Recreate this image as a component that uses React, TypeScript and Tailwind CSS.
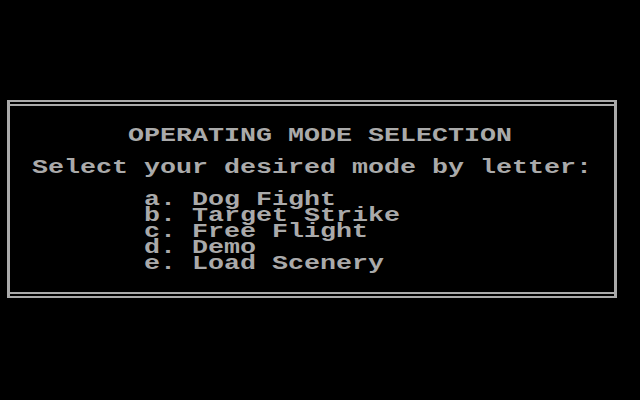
const modes = [
  { key: "a", label: "Dog Fight" },
  { key: "b", label: "Target Strike" },
  { key: "c", label: "Free Flight" },
  { key: "d", label: "Demo" },
  { key: "e", label: "Load Scenery" },
];

const row = "h-[16px] leading-[16px] whitespace-pre";
// 20px mono = 12px advance, widened to the 16px cell of the old 40-column text mode
const glyphs =
  "inline-block origin-left scale-x-[1.3333] text-[20px] font-bold text-[#aaaaaa]";

export default function App() {
  return (
    <div
      className="h-[400px] w-[640px] bg-black pt-[100px] pl-[7px]"
      style={{ fontFamily: '"Liberation Mono", "DejaVu Sans Mono", monospace' }}
    >
      {/* double-ruled frame */}
      <div className="w-[610px] h-[198px] border-y-2 border-x-[3px] border-[#aaaaaa] py-[2px]">
        <div className="h-full border-y-2 border-[#aaaaaa] pt-[22px]">
          <div className={`${row} pl-[118px]`}>
            <span className={glyphs}>OPERATING MODE SELECTION</span>
          </div>
          <div className={`${row} pl-[22px] mt-[16px]`}>
            <span className={glyphs}>Select your desired mode by letter:</span>
          </div>
          <div className="mt-[16px] pl-[134px]">
            {modes.map((m) => (
              <div key={m.key} className={row}>
                <span className={glyphs}>{`${m.key}. ${m.label}`}</span>
              </div>
            ))}
          </div>
        </div>
      </div>
    </div>
  );
}
